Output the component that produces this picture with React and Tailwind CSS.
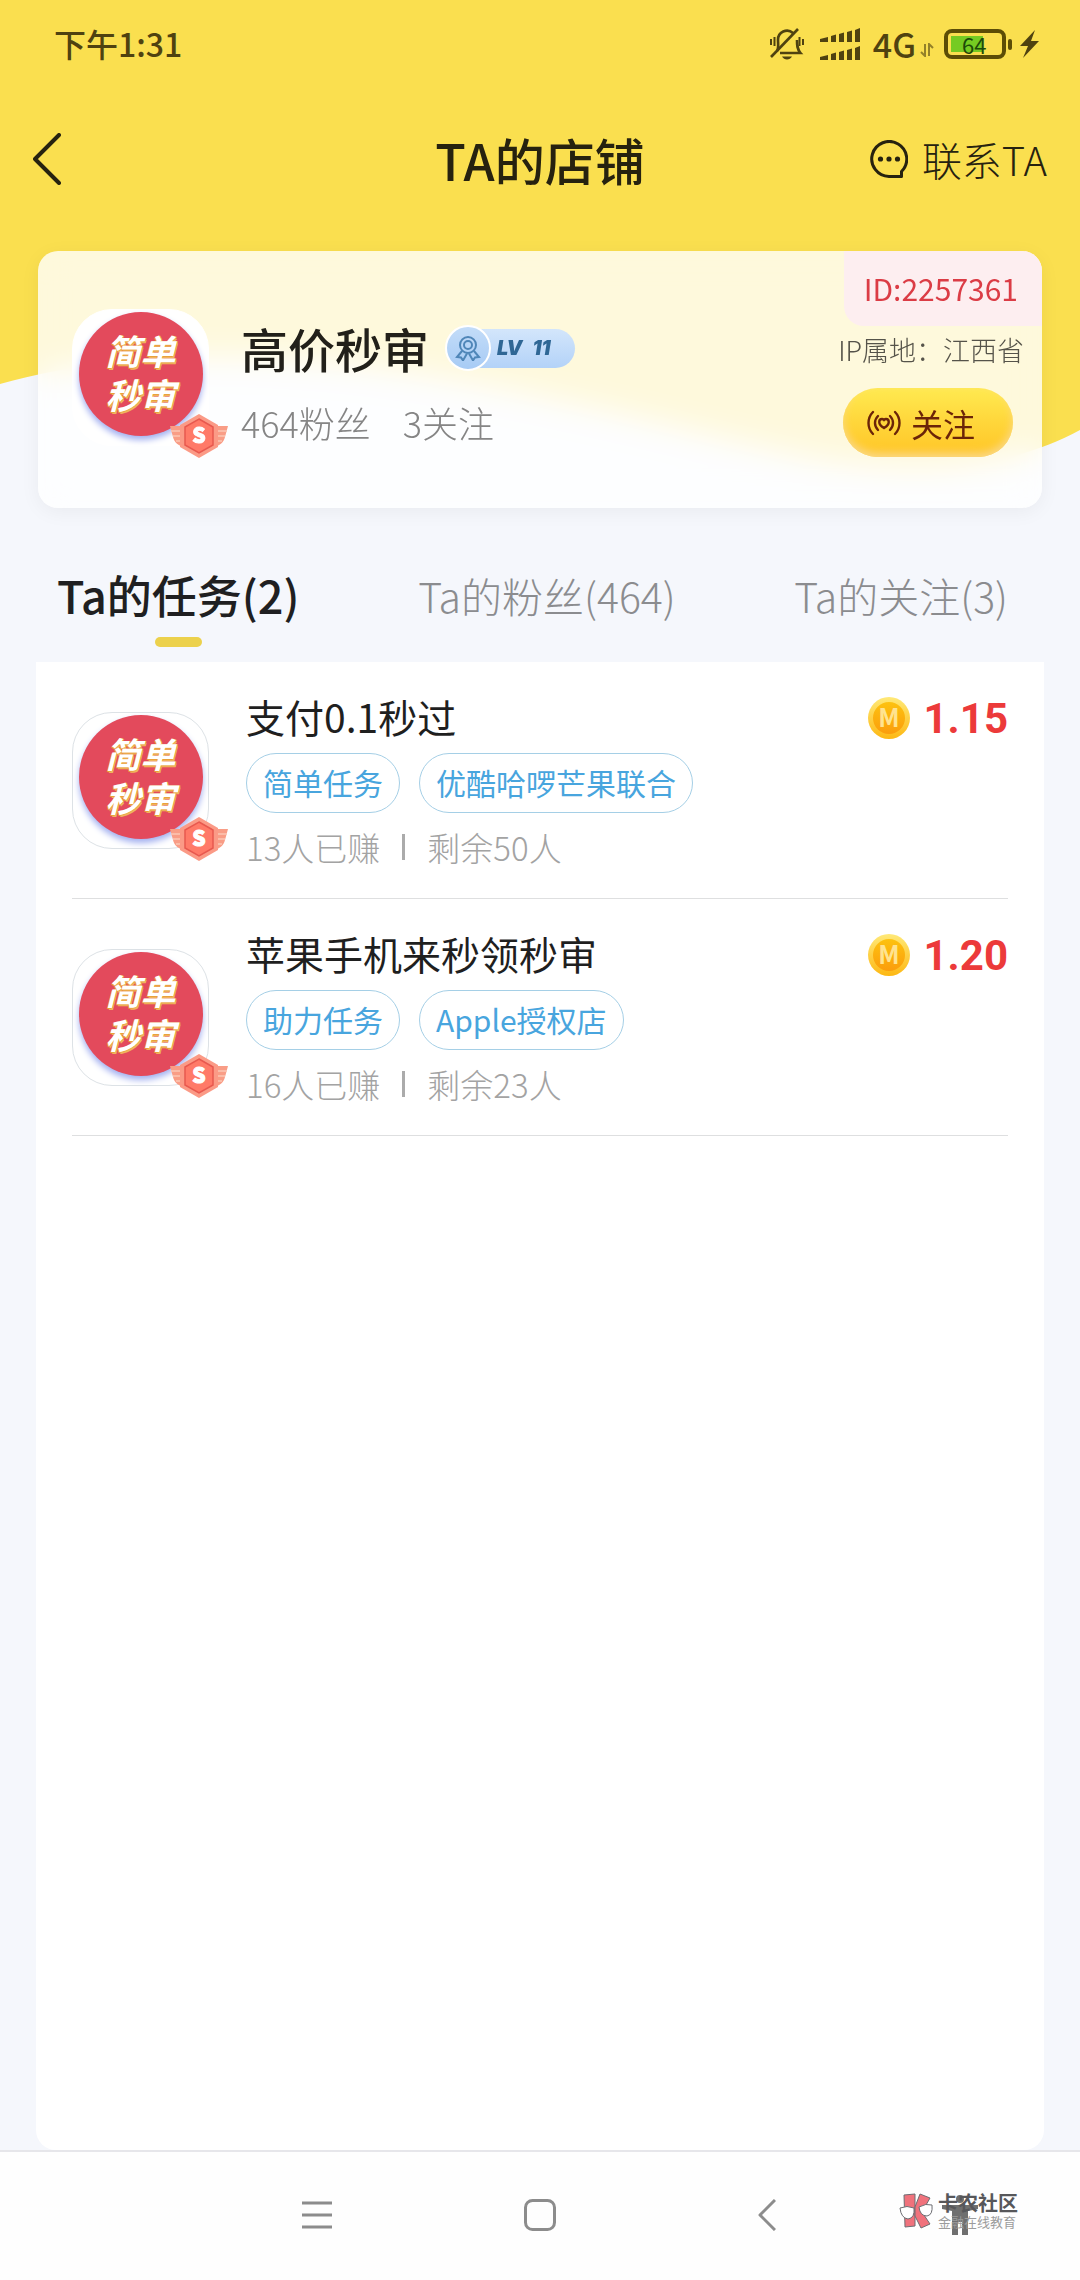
const tasks = [
  { id: 1, title: '支付0.1秒过', tags: ['简单任务', '优酷哈啰芒果联合'], done: 13, left: 50, price: '1.15' },
  { id: 2, title: '苹果手机来秒领秒审', tags: ['助力任务', 'Apple授权店'], done: 16, left: 23, price: '1.20' },
]

function StatusBar() {
  return (
    <div className="flex h-[88px] items-center justify-between pr-[41px] pl-[54px] text-[#4f4210]">
      <span className="pb-[2px] text-[32px] font-medium">下午1:31</span>
      <div className="flex items-center">
        <svg className="mr-4" width="34" height="34" viewBox="0 0 34 34" fill="none" stroke="currentColor" strokeWidth="2.6">
          <path d="M7 24c2-3 1-7 1-11a9 9 0 0 1 15-7M27 13c0 5 0 9 3.500 13H10" />
          <path d="M1 30 28 2" />
          <path d="M1 12v6M4.500 10v9M29.500 10v9M33 12v6" strokeWidth="2" />
          <path d="M12 29.500h10c-2 4-8 4-10 0z" fill="currentColor" stroke="none" />
        </svg>
        <svg className="mr-3" width="41" height="32" viewBox="0 0 41 32" fill="currentColor">
          <path d="M0 11 8 9v5H0zM11 8l5-1.500V14h-5zM19 6l5-1.500V14h-5zM27 4l5-1.500V14h-5zM35 2l5-2v14h-5z" />
          <path d="M0 29 8 27v5H0zM11 26l5-1.500V32h-5zM19 24l5-1.500V32h-5zM27 22l5-1.500V32h-5zM35 20l5-2v14h-5z" />
        </svg>
        <span className="pb-[2px] text-[34px] font-medium">4G</span>
        <svg className="mx-1 mt-3" width="14" height="14" viewBox="0 0 14 14" fill="none" stroke="currentColor" strokeWidth="2" opacity="0.6">
          <path d="M5 1v12L1 9M9 13V1l4 4" />
        </svg>
        <div className="ml-[6px] flex h-[30px] w-[62px] items-center rounded-lg border-4 border-[#5c4d06] p-[3px]">
          <div className="flex h-4 w-8 items-center bg-[#75cb22] pl-[11px] text-[22px] leading-none text-[#1d4a08]">64</div>
        </div>
        <div className="ml-[2px] h-[11px] w-1 rounded-sm bg-[#5c4d06]" />
        <svg className="ml-2" width="19" height="28" viewBox="0 0 19 28" fill="currentColor">
          <path d="M15 0 0 16h8L3 28 19 11h-8z" />
        </svg>
      </div>
    </div>
  )
}

function Header() {
  return (
    <header className="grid h-[144px] grid-cols-[1fr_auto_1fr] items-center pr-[33px] pb-[2px] pl-[33px] text-[#26220f]">
      <button aria-label="返回" className="justify-self-start">
        <svg width="29" height="52" viewBox="0 0 29 52" fill="none" stroke="currentColor" strokeWidth="4" strokeLinecap="round" strokeLinejoin="round">
          <path d="M26 2 2 26l24 24" />
        </svg>
      </button>
      <h1 className="text-[50px] font-medium">TA的店铺</h1>
      <button className="flex items-center gap-[14px] justify-self-end text-[40px] font-light">
        <svg width="38" height="38" viewBox="0 0 38 38" fill="none" stroke="currentColor" strokeWidth="3">
          <path d="M31.500 31.500A17.500 17.500 0 1 0 19 36.500H31.500z" strokeLinejoin="round" />
          <g fill="currentColor" stroke="none">
            <circle cx="10.500" cy="19" r="2.600" /><circle cx="19" cy="19" r="2.600" /><circle cx="27.500" cy="19" r="2.600" />
          </g>
        </svg>
        联系TA
      </button>
    </header>
  )
}

function RankBadge() {
  return (
    <svg className="absolute -right-5 -bottom-[13px]" width="58" height="44" viewBox="0 0 58 44">
      <path d="M0 12h17v22c-9-2-13-6-14-11zM58 12H41v22c9-2 13-6 14-11z" fill="#f99d86" />
      <path d="M1 17h14M3 22h12M6 27h9M57 17H43M55 22H43M52 27h-9" stroke="#fcc6b4" strokeWidth="1.500" />
      <path d="M29 0 48 11v22L29 44 10 33V11z" fill="#fb9a86" />
      <path d="M29 5 43 13v18l-14 8-14-8V13z" fill="#ff7a68" stroke="#e8594f" strokeWidth="1.500" />
      <text x="29" y="29" textAnchor="middle" fontSize="21" fontWeight="900" fill="#fff" stroke="#fff">S</text>
    </svg>
  )
}

function Avatar({ className }) {
  return (
    <div className={`relative flex h-[137px] w-[137px] shrink-0 justify-center rounded-[40px] border bg-white pt-[2px] ${className}`}>
      <div className="flex h-[124px] w-[124px] flex-col items-center justify-center rounded-full bg-[#e34a5c] pb-1 text-[35px] leading-[44px] font-bold text-white italic shadow-[0_4px_6px_#a3b0f0] [text-shadow:1px_0_#e9a13c,-1px_1px_#e9a13c,1px_2px_#f0b45c]">
        <span>简单</span>
        <span>秒审</span>
      </div>
      <RankBadge />
    </div>
  )
}

function LevelPill() {
  return (
    <div className="flex items-center">
      <div className="z-10 flex h-[46px] w-[46px] items-center justify-center rounded-full border-2 border-white bg-linear-to-b from-[#c3dcf8] to-[#a7cbf5]">
        <svg width="26" height="26" viewBox="0 0 26 26" fill="none" stroke="#4f86b8" strokeWidth="2">
          <circle cx="13" cy="10" r="8" />
          <circle cx="13" cy="10" r="4" />
          <path d="m7 16-5 6 4 .5 2 3 4-7M19 16l5 6-4 .5-2 3-4-7" />
        </svg>
      </div>
      <div className="-ml-3 flex h-[39px] items-center gap-[10px] rounded-r-full bg-linear-to-b from-[#d3e6fb] to-[#b3d2f8] pr-6 pl-[18px] font-[Inter] text-[20px] font-black text-[#2f6795] italic">
        <span>LV</span>
        <span>11</span>
      </div>
    </div>
  )
}

function Profile() {
  return (
    <section className="grid">
      <svg className="col-start-1 row-start-1 h-full w-full" viewBox="0 0 1080 257" preserveAspectRatio="none">
        <path d="M0 0H1080V179C1000 222 900 228 780 200C560 150 260 60 0 133z" fill="#fadf4f" />
      </svg>
      <div className="col-start-1 row-start-1 mx-[38px] flex rounded-[20px] bg-white/80 pl-[34px] shadow-[0_4px_20px_rgba(0,0,0,0.05)] backdrop-blur-[16px]">
        <div className="pt-[58px] pb-[62px]">
          <Avatar className="border-white" />
        </div>
        <div className="flex-1 pt-[67px] pl-8">
          <div className="flex h-[60px] items-center gap-4">
            <h2 className="text-[47px] font-medium text-[#22201a]">高价秒审</h2>
            <LevelPill />
          </div>
          <div className="mt-5 flex gap-8 text-[36px] leading-[48px] font-light text-[#858585]">
            <span>464粉丝</span>
            <span>3关注</span>
          </div>
        </div>
        <div className="flex flex-col items-end">
          <div className="flex h-[75px] items-center rounded-tr-[20px] rounded-bl-[20px] bg-[#fdeef0] pr-6 pl-5 text-[30px] text-[#db3c45]">ID:2257361</div>
          <div className="mt-[6px] mr-[18px] text-[27px] leading-[36px] font-light text-[#55534a]">IP属地：江西省</div>
          <button className="mt-5 mr-[29px] flex h-[69px] w-[170px] items-center gap-[10px] rounded-full bg-linear-to-b from-[#ffea50] via-[#ffd63a] to-[#ffc524] pl-6 text-[32px] text-[#6b2408] shadow-[inset_0_-4px_8px_#fbd98a]">
            <svg width="34" height="26" viewBox="0 0 34 26" fill="none" stroke="currentColor" strokeWidth="2.400" strokeLinecap="round">
              <path d="M6 2C0 8 0 18 6 24M11 6c-4 4-4 10 0 14M28 2c6 6 6 16 0 22M23 6c4 4 4 10 0 14" />
              <path d="M17 18c-7-4-5-9-2-9 1 0 2 1 2 1s1-1 2-1c3 0 5 5-2 9z" />
            </svg>
            关注
          </button>
        </div>
      </div>
    </section>
  )
}

function Tabs() {
  return (
    <nav className="flex items-start justify-between pt-[57px] pr-[72px] pb-[15px] pl-[57px] text-[41px] leading-[60px] font-light text-[#8b8c8f]">
      <button className="flex flex-col items-center gap-3 text-[45px] font-medium text-[#1f1f21]">
        Ta的任务(2)
        <span className="h-[10px] w-[47px] rounded-full bg-[#ecd14c]" />
      </button>
      <button>Ta的粉丝(464)</button>
      <button>Ta的关注(3)</button>
    </nav>
  )
}

function Coin() {
  return (
    <svg width="42" height="42" viewBox="0 0 42 42">
      <defs>
        <linearGradient id="rim" x1="0" y1="0" x2="0" y2="1">
          <stop offset="0" stopColor="#ffe978" />
          <stop offset="1" stopColor="#fdb813" />
        </linearGradient>
        <linearGradient id="face" x1="0" y1="0" x2="0" y2="1">
          <stop offset="0" stopColor="#fdc210" />
          <stop offset="1" stopColor="#fb9d0c" />
        </linearGradient>
      </defs>
      <circle cx="21" cy="21" r="21" fill="url(#rim)" />
      <circle cx="21" cy="21" r="16" fill="url(#face)" />
      <text x="21" y="30" textAnchor="middle" fontSize="25" fontWeight="700" fill="#ffe390">M</text>
    </svg>
  )
}

function Task({ task }) {
  return (
    <li className="flex border-b border-[#dedfe0] pt-[30px] pb-[27px]">
      <div className="pt-5">
        <Avatar className="border-[#dde2e6]" />
      </div>
      <div className="flex-1 pl-[37px]">
        <h3 className="text-[39px] leading-[48px] text-[#1f1f1f]">{task.title}</h3>
        <div className="mt-[13px] flex gap-[19px]">
          {task.tags.map(tag => (
            <span key={tag} className="flex h-[60px] items-center rounded-full border border-[#a5cfe6] px-4 pb-[2px] text-[30px] text-[#48a5de]">{tag}</span>
          ))}
        </div>
        <div className="mt-[10px] flex items-center gap-[22px] text-[33px] leading-[48px] font-light text-[#a3a3a3]">
          <span>{task.done}人已赚</span>
          <span className="h-[26px] w-[3px] bg-[#ababab]" />
          <span>剩余{task.left}人</span>
        </div>
      </div>
      <div className="flex h-[52px] items-center gap-[14px]">
        <Coin />
        <span className="font-[Roboto] text-[42px] font-bold text-[#ec3a3a]">{task.price}</span>
      </div>
    </li>
  )
}

function BottomNav() {
  return (
    <footer className="relative grid h-[130px] grid-cols-[205fr_224fr_222fr_232fr_154fr_43fr] items-center border-t-2 border-[#e6e6ea] bg-[#fefefe] pb-[2px] text-[#8c8c8c]">
      <button aria-label="菜单" className="col-start-2 justify-self-center">
        <svg width="30" height="28" viewBox="0 0 30 28" stroke="currentColor" strokeWidth="3">
          <path d="M0 2h30M0 14h30M0 26h30" />
        </svg>
      </button>
      <button aria-label="主页" className="justify-self-center">
        <svg width="32" height="32" viewBox="0 0 32 32" fill="none" stroke="currentColor" strokeWidth="3">
          <rect x="1.500" y="1.500" width="29" height="29" rx="7" />
        </svg>
      </button>
      <button aria-label="后退" className="justify-self-center">
        <svg width="18" height="32" viewBox="0 0 18 32" fill="none" stroke="currentColor" strokeWidth="3" strokeLinejoin="round">
          <path d="M17 1 2 16l15 15" />
        </svg>
      </button>
      <button aria-label="无障碍" className="justify-self-center">
        <svg width="36" height="40" viewBox="0 0 36 40" fill="#6f6f6f">
          <circle cx="18" cy="4" r="4" />
          <path d="M0 10h36v4l-10 2v24h-6V27h-4v13h-6V16L0 14z" />
        </svg>
      </button>
      <div className="absolute top-[40px] right-[62px] flex items-center gap-1">
        <svg width="35" height="36" viewBox="0 0 35 36" stroke="#6d6d72" strokeWidth="1">
          <path d="M5 2 16 1v32l-10 1z" fill="#f0727c" />
          <path d="m21 1 10 4-8 14 8 12-9 4-6-12V14z" fill="#f0727c" />
          <path d="M1 15q7-3 14 0 1 10-6 11-7-1-8-11zM20 14q7-4 13-2 1 10-5 11-7 0-8-9z" fill="#fff" />
        </svg>
        <div className="flex flex-col">
          <span className="text-[20px] leading-[22px] font-bold text-[#57575a]">卡农社区</span>
          <span className="text-[13px] leading-[16px] text-[#9c9c9c]">金融在线教育</span>
        </div>
      </div>
    </footer>
  )
}

export default function App() {
  return (
    <div className="flex min-h-screen flex-col bg-[#f5f7fc] font-['Noto_Sans_CJK_SC',sans-serif]">
      <div className="bg-[#fadf4f] pb-[19px]">
        <StatusBar />
        <Header />
      </div>
      <Profile />
      <Tabs />
      <ul className="mx-9 flex-1 rounded-b-[20px] bg-white px-9">
        {tasks.map(task => <Task key={task.id} task={task} />)}
      </ul>
      <BottomNav />
    </div>
  )
}
